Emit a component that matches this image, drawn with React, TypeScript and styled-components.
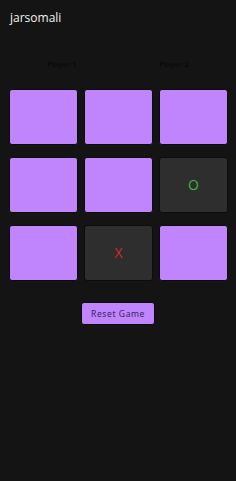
import React, { useState } from 'react';
import styled, { createGlobalStyle } from 'styled-components';

const GlobalStyle = createGlobalStyle`
  html, body {
    margin: 0;
    padding: 0;
    background: #141414;
    font-family: "Open Sans", "Noto Sans", sans-serif;
  }
`;

const Page = styled.div`
  width: 236px;
  height: 481px;
  background: #141414;
  display: flex;
  flex-direction: column;
`;

const Title = styled.h1`
  margin: 0;
  padding: 9px 0 0 10px;
  font-size: 12px;
  line-height: 17px;
  font-weight: 400;
  color: #f2f2f2;
`;

const Players = styled.div`
  display: flex;
  justify-content: space-around;
  padding: 0 6px;
  margin-top: 32px;
`;

const PlayerLabel = styled.span`
  font-size: 8px;
  line-height: 12px;
  color: #050505;
`;

const Board = styled.div`
  display: grid;
  grid-template-columns: repeat(3, 69px);
  grid-auto-rows: 56px;
  column-gap: 6px;
  row-gap: 12px;
  margin: 19px 0 0 9px;
`;

const Cell = styled.button<{ $played: boolean }>`
  margin: 0;
  padding: 0;
  border: 1px solid #0c0c0c;
  border-radius: 3px;
  background: ${p => (p.$played ? '#2e2e2e' : '#c084fc')};
  display: flex;
  align-items: center;
  justify-content: center;
  font-family: "Open Sans", sans-serif;
  font-size: 14px;
  cursor: pointer;
`;

const Mark = styled.span<{ $mark: string }>`
  color: ${p => (p.$mark === 'X' ? '#d42a2a' : '#3fb83a')};
  line-height: 1;
`;

const ResetButton = styled.button`
  align-self: center;
  margin-top: 21px;
  width: 74px;
  height: 23px;
  padding: 0;
  background: #c084fc;
  border: 1px solid #0c0c0c;
  border-radius: 3px;
  color: #3a2358;
  font-family: "Noto Sans", sans-serif;
  font-size: 8.5px;
  letter-spacing: 0.6px;
  cursor: pointer;
`;

const initial = ['', '', '', '', '', 'O', '', 'X', ''];

export default function App() {
  const [cells, setCells] = useState<string[]>(initial);
  const [turn, setTurn] = useState('X');

  const play = (i: number) => {
    if (cells[i]) return;
    const next = [...cells];
    next[i] = turn;
    setCells(next);
    setTurn(turn === 'X' ? 'O' : 'X');
  };

  return (
    <>
      <GlobalStyle />
      <Page>
        <Title>jarsomali</Title>
        <Players>
          <PlayerLabel>Player 1</PlayerLabel>
          <PlayerLabel>Player 2</PlayerLabel>
        </Players>
        <Board>
          {cells.map((c, i) => (
            <Cell key={i} $played={!!c} onClick={() => play(i)}>
              {c && <Mark $mark={c}>{c}</Mark>}
            </Cell>
          ))}
        </Board>
        <ResetButton onClick={() => setCells(Array(9).fill(''))}>Reset Game</ResetButton>
      </Page>
    </>
  );
}
